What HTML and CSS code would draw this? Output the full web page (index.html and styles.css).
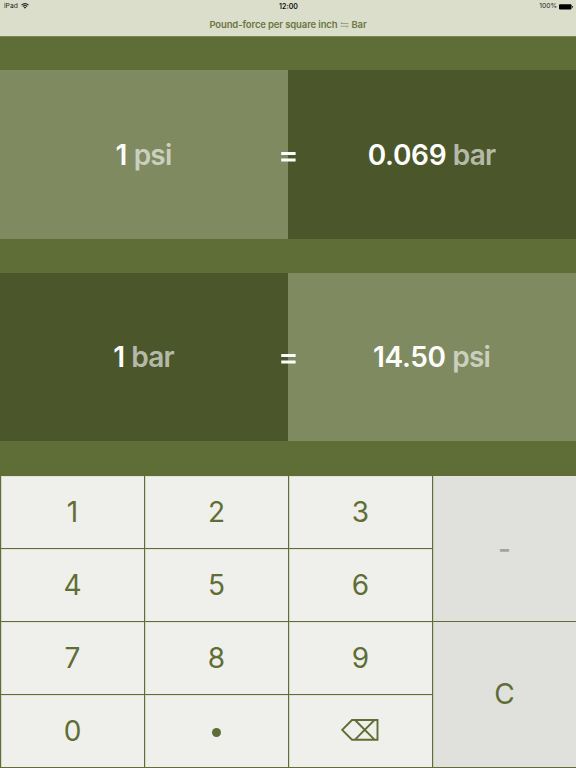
FILE: index.html
```html
<!DOCTYPE html>
<html lang="en">
<head>
<meta charset="utf-8">
<title>Pound-force per square inch ⇆ Bar</title>
<link rel="stylesheet" href="styles.css">
</head>
<body>
<div class="app">
  <header class="header">
    <div class="status">
      <div class="carrier"><span class="device">iPad</span>
        <svg class="wifi" width="8" height="6" viewBox="0 0 8 6"><path d="M.5 2.2Q4-1 7.500 2.200M1.800 3.500Q4 1.600 6.200 3.500" fill="none" stroke="#222" stroke-width="1.100"/><path d="M2.700 4.300Q4 3.300 5.300 4.300L4 5.800Z" fill="#222"/></svg>
      </div>
      <div class="clock">12:00</div>
      <div class="power"><span class="percent">100%</span>
        <svg width="14" height="6" viewBox="0 0 14 6"><rect x="0" y=".2" width="12.500" height="5.400" rx="1"/><path d="M13 2q1 .2 1 .9t-1 .9z"/></svg>
      </div>
    </div>
    <h1 class="title"><span class="from">Pound-force per square inch</span>
      <svg class="swap" width="9" height="6" viewBox="0 0 9 6"><path d="M8.500 1.500H.8L2.300.2M.5 4.200H8.200L6.700 5.500" fill="none" stroke="#7f8a60" stroke-width=".7"/></svg>
      <span class="to">Bar</span></h1>
  </header>
  <main class="conversions">
    <section class="conversion">
      <div class="side light"><span class="num">1</span><span class="unit">psi</span></div>
      <div class="side dark"><span class="num">0.069</span><span class="unit">bar</span></div>
      <svg class="equals" width="15" height="10" viewBox="0 0 15 10"><path d="M.2 0h14.400v3H.2zM.2 6.500h14.400v3H.2z" fill="#fff"/></svg>
    </section>
    <section class="conversion">
      <div class="side dark"><span class="num">1</span><span class="unit">bar</span></div>
      <div class="side light"><span class="num">14.50</span><span class="unit">psi</span></div>
      <svg class="equals" width="15" height="10" viewBox="0 0 15 10"><path d="M.2 0h14.400v3H.2zM.2 6.500h14.400v3H.2z" fill="#fff"/></svg>
    </section>
  </main>
  <div class="keypad">
    <button class="key">1</button>
    <button class="key">2</button>
    <button class="key">3</button>
    <button class="key wide minus">-</button>
    <button class="key">4</button>
    <button class="key">5</button>
    <button class="key">6</button>
    <button class="key">7</button>
    <button class="key">8</button>
    <button class="key">9</button>
    <button class="key wide clear">C</button>
    <button class="key">0</button>
    <button class="key"><span class="dot"></span></button>
    <button class="key delete" aria-label="Delete"><svg width="38" height="22" viewBox="0 0 38 22"><path d="M11 1H36.500V20.700H11L1.200 10.850ZM14 1L33.500 20.700M33.500 1L14 20.700" fill="none" stroke="#5f6d36" stroke-width="1.900"/></svg></button>
  </div>
</div>
</body>
</html>
```

FILE: styles.css
```css
* { box-sizing: border-box; }
body { margin: 0; font-family: Inter, "Liberation Sans", sans-serif; }
svg { display: block; flex: none; }
.app {
  width: 576px;
  height: 768px;
  display: flex;
  flex-direction: column;
  background: #5f6d36;
  overflow: hidden;
}
.header {
  height: 37px;
  background: #dadeca;
  border-bottom: 1px solid #7b8659;
}
.status {
  height: 13px;
  display: grid;
  grid-template-columns: 1fr auto 1fr;
  align-items: center;
  padding: 0 3px 0 4px;
  font-size: 6.7px;
  line-height: 13px;
  color: #222;
}
.carrier, .power { display: flex; align-items: center; gap: 3px; }
.power { justify-content: flex-end; gap: 2px; }
.wifi { margin-bottom: 1px; }
.clock { font-weight: 600; font-size: 7px; color: #111; }
.title {
  margin: 4px 0 0;
  height: 15px;
  display: flex;
  align-items: center;
  justify-content: center;
  gap: 2.5px;
  font-size: 9.5px;
  line-height: 15px;
  letter-spacing: -0.13px;
  font-weight: 600;
  color: #6a7743;
}
.conversions {
  height: 439px;
  padding-top: 33px;
  display: flex;
  flex-direction: column;
  gap: 34px;
}
.conversion {
  position: relative;
  height: 168.5px;
  display: grid;
  grid-template-columns: 1fr 1fr;
}
.side {
  display: flex;
  align-items: center;
  justify-content: center;
  gap: 6.5px;
  padding: 1px 1px 0 0;
  font-size: 28px;
  line-height: 34px;
  letter-spacing: -0.3px;
  color: #fff;
}
.num { font-weight: 600; }
.unit { font-weight: 600; letter-spacing: -0.8px; color: rgba(255, 255, 255, 0.6); }
.light { background: #7f8a60; }
.dark { background: #4b562b; }
.equals { position: absolute; left: 280.5px; top: 81.5px; }
.keypad {
  height: 292px;
  padding: 0 0 1px 1px;
  display: grid;
  grid-template-columns: repeat(4, 143px);
  grid-template-rows: repeat(4, 72px);
  gap: 1px;
}
.key {
  border: 0;
  margin: 0;
  padding: 0;
  display: flex;
  align-items: center;
  justify-content: center;
  font: 400 28px/34px Inter, "Liberation Sans", sans-serif;
  color: #5f6d36;
  background: #eff0eb;
  box-shadow: inset 1px 0 #d3d7c5, inset 0 1px #e0e3d6;
}
.wide { grid-column: 4; grid-row: span 2; background: #e0e1dc; box-shadow: inset 1px 0 #c9cdbc; }
.minus { color: #a4a5a0; font-weight: 500; }
.clear { padding-bottom: 2px; }
.delete { padding: 0 2px 2px 0; }
.dot { width: 9px; height: 9px; border-radius: 50%; background: #5f6d36; margin-top: 3px; }
```
